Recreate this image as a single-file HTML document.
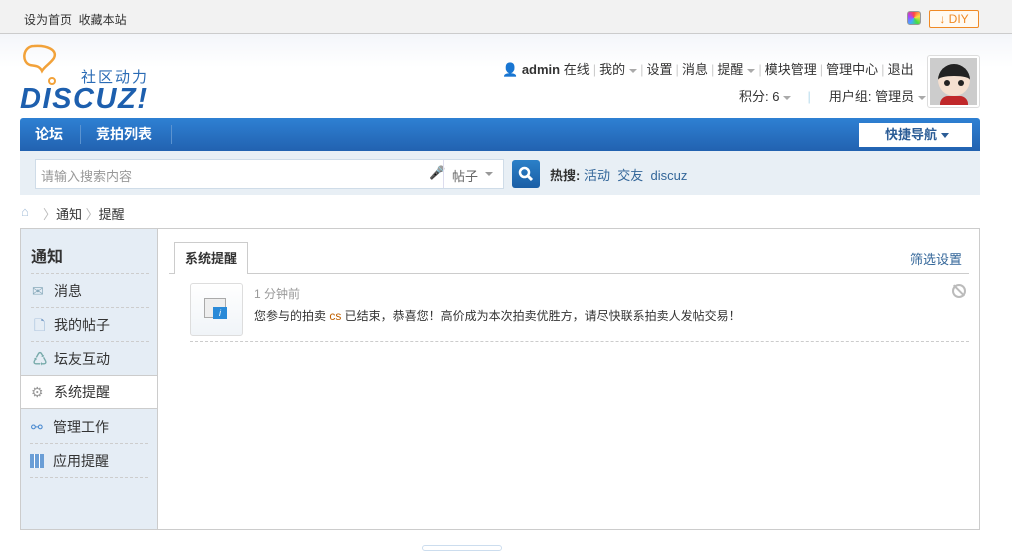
<!DOCTYPE html>
<html><head><meta charset="utf-8"><style>
*{margin:0;padding:0;box-sizing:border-box}
body{width:1012px;height:549px;overflow:hidden;background:#fff;font:12px "Liberation Sans","Noto Sans CJK SC",sans-serif;color:#333;position:relative}
.a{position:absolute}
a{color:#336699;text-decoration:none}
.tb{left:0;top:0;width:1012px;height:34px;background:#f2f2f2;border-bottom:1px solid #ccc}
.hd{left:0;top:34px;width:1012px;height:84px;background:linear-gradient(#f4f6fa,#fff 40%)}
.sep{color:#ccc;margin:0 3px}
.caret{display:inline-block;width:0;height:0;border:4px solid transparent;border-top-color:#aaa;border-bottom:0;vertical-align:middle;margin-left:4px}
.nav{left:20px;top:118px;width:960px;height:33px;background:linear-gradient(#2e80d3,#2262b0);border-radius:3px 3px 0 0}
.nav span{position:absolute;top:0;height:33px;line-height:33px;color:#fff;font-size:14px;font-weight:bold}
.sch{left:20px;top:151px;width:960px;height:44px;background:#e8eff5}
.side{left:20px;top:228px;width:138px;height:302px;background:#e5edf5;border:1px solid #ccc;border-right:none}
.side .it{position:absolute;left:10px;width:118px;height:34px;line-height:34px;font-size:14px;padding-left:23px;border-bottom:1px dashed #cdcdcd}
.main{left:157px;top:228px;width:823px;height:302px;border:1px solid #ccc;border-left:1px solid #ccc}
</style></head><body>
<div class="a" style="left:0;top:4px;width:1012px;height:1px;background:#aab0c8"></div>
<div class="a tb"></div>
<div class="a" style="left:24px;top:11px;font-size:12px;color:#333">设为首页&nbsp;&nbsp;收藏本站</div>
<div class="a" style="left:907px;top:11px;width:14px;height:14px;border:1px solid #999;border-radius:3px;background:conic-gradient(#f44,#fd4,#4d4,#4af,#a4f,#f44)"></div>
<div class="a" style="left:929px;top:10px;width:50px;height:18px;border:1px solid #f08a24;border-radius:2px;background:#fffaf2;color:#f08a24;font-size:12px;line-height:16px;text-align:center">↓ DIY</div>
<div class="a hd"></div>
<!-- logo -->
<svg class="a" style="left:20px;top:44px" width="140" height="68">
<path d="M14 2 C3 2 1 18 10 21 C14 22 19 21 22 27 C25 22 30 20 34 14 C38 6 27 1 14 2Z" fill="none" stroke="#f2a23a" stroke-width="2.5"/>
<circle cx="32" cy="37" r="3" fill="none" stroke="#f2a23a" stroke-width="2"/>
<text x="0" y="64" font-family="Liberation Sans" font-style="italic" font-weight="bold" font-size="29" fill="#1d5fae" letter-spacing="-1" textLength="126">DISCUZ!</text>
</svg>
<div class="a" style="left:81px;top:66px;color:#2a6bb5;font-size:15px;letter-spacing:2px">社区动力</div>
<div class="a" style="left:502px;top:59px;font-size:13px;color:#333;white-space:nowrap">
<span style="color:#7aa3d0">👤</span> <b>admin</b> 在线<span class="sep">|</span>我的<span class="caret"></span><span class="sep">|</span>设置<span class="sep">|</span>消息<span class="sep">|</span>提醒<span class="caret"></span><span class="sep">|</span>模块管理<span class="sep">|</span>管理中心<span class="sep">|</span>退出</div>
<div class="a" style="left:739px;top:86px;font-size:13px;color:#333;white-space:nowrap">积分: 6<span class="caret"></span><span class="sep" style="margin:0 18px 0 16px;color:#bde">|</span>用户组: 管理员<span class="caret"></span></div>
<div class="a" style="left:927px;top:55px;width:53px;height:53px;border:1px solid #ddd;border-radius:3px;background:#fff;padding:2px">
<div style="width:47px;height:47px;background:#ccc;position:relative;overflow:hidden">
<div class="a" style="left:8px;top:6px;width:32px;height:32px;border-radius:50%;background:#f5e0d0;border-top:12px solid #222"></div>
<div class="a" style="left:14px;top:22px;width:6px;height:6px;border-radius:50%;background:#222"></div>
<div class="a" style="left:28px;top:22px;width:6px;height:6px;border-radius:50%;background:#222"></div>
<div class="a" style="left:10px;top:38px;width:28px;height:12px;background:#c0282a;border-radius:8px 8px 0 0"></div>
</div></div>
<div class="a nav">
<span style="left:15px">论坛</span>
<div class="a" style="left:60px;top:7px;width:1px;height:19px;background:#5b93d0"></div>
<span style="left:76px">竞拍列表</span>
<div class="a" style="left:151px;top:7px;width:1px;height:19px;background:#5b93d0"></div>
<div class="a" style="left:839px;top:5px;width:113px;height:24px;background:#fff;color:#2b5c96;font-size:13px;font-weight:bold;line-height:24px;padding-left:26px">快捷导航<span class="a" style="left:82px;top:10px;border:4px solid transparent;border-top:5px solid #2b5c96;border-bottom:0"></span></div>
</div>
<div class="a sch"></div>
<div class="a" style="left:35px;top:159px;width:469px;height:30px;background:#fff;border:1px solid #cfdce8"></div>
<div class="a" style="left:41px;top:166px;color:#999;font-size:13px">请输入搜索内容</div>
<div class="a" style="left:429px;top:165px;color:#aaa;font-size:13px">🎤</div>
<div class="a" style="left:443px;top:160px;width:1px;height:28px;background:#dde"></div>
<div class="a" style="left:452px;top:166px;color:#666;font-size:13px">帖子</div>
<div class="a" style="left:485px;top:172px;border:4px solid transparent;border-top-color:#999;border-bottom:0"></div>
<div class="a" style="left:512px;top:160px;width:28px;height:28px;background:linear-gradient(#2b80c8,#1a5ea5);border-radius:3px"></div>
<svg class="a" style="left:517px;top:165px" width="18" height="18"><circle cx="7.5" cy="7.5" r="4.5" fill="none" stroke="#fff" stroke-width="2.5"/><path d="M11 11 L15 15" stroke="#fff" stroke-width="3"/></svg>
<div class="a" style="left:550px;top:165px;font-size:13px;white-space:nowrap"><b>热搜:</b> <a>活动</a>&nbsp;&nbsp;<a>交友</a>&nbsp;&nbsp;<a>discuz</a></div>
<div class="a" style="left:21px;top:204px;color:#a8c0da;font-size:13px">⌂</div>
<div class="a" style="left:43px;top:204px;font-size:13px;color:#333;white-space:nowrap"><span style="color:#bbb">〉</span>通知 <span style="color:#bbb">〉</span>提醒</div>
<div class="a side">
<div class="a" style="left:10px;top:14px;font-size:16px;font-weight:bold;color:#333">通知</div>
<div class="a" style="left:10px;top:44px;width:118px;border-bottom:1px dashed #cdcdcd"></div>
<div class="it" style="top:45px"><span class="a" style="left:1px;color:#8ab">✉</span>消息</div>
<div class="it" style="top:79px"><span class="a" style="left:3px;color:#7a9fc8">🗋</span>我的帖子</div>
<div class="it" style="top:113px;border:none"><span class="a" style="left:2px;color:#7aa">♺</span>坛友互动</div>
</div>
<div class="a" style="left:20px;top:375px;width:138px;height:34px;background:#fff;border-top:1px solid #ccc;border-bottom:1px solid #ccc;border-left:1px solid #ccc;font-size:14px;line-height:33px;padding-left:33px"><span class="a" style="left:10px;color:#999">⚙</span>系统提醒</div>
<div class="a" style="left:30px;top:410px;width:118px;height:34px;line-height:34px;font-size:14px;padding-left:23px;border-bottom:1px dashed #cdcdcd"><span class="a" style="left:1px;color:#4a8ad0">⚯</span>管理工作</div>
<div class="a" style="left:30px;top:444px;width:118px;height:34px;line-height:34px;font-size:14px;padding-left:23px;border-bottom:1px dashed #cdcdcd"><span class="a" style="left:0;top:10px;width:14px;height:14px;background:repeating-linear-gradient(90deg,#6a9ed6 0 4px,transparent 4px 5px),#fff;"></span>应用提醒</div>
<div class="a main"></div>
<div class="a" style="left:169px;top:273px;width:800px;height:1px;background:#ccc"></div>
<div class="a" style="left:174px;top:242px;width:74px;height:32px;background:#fff;border:1px solid #ccc;border-bottom:none;font-size:13px;font-weight:bold;line-height:32px;text-align:center">系统提醒</div>
<div class="a" style="left:910px;top:249px;font-size:13px;color:#336699">筛选设置</div>
<div class="a" style="left:190px;top:283px;width:53px;height:53px;border:1px solid #ddd;border-radius:3px;background:linear-gradient(#fff,#f0f4f8)"></div>
<div class="a" style="left:204px;top:298px;width:22px;height:20px;border:1px solid #aaa;background:#eee"></div>
<div class="a" style="left:213px;top:307px;width:14px;height:12px;background:#2a8ad8;color:#fff;font-size:9px;text-align:center;line-height:12px;font-style:italic">i</div>
<div class="a" style="left:254px;top:285px;color:#999;font-size:12px">1 分钟前</div>
<div class="a" style="left:254px;top:307px;color:#333;font-size:12px;white-space:nowrap">您参与的拍卖 <span style="color:#c06000">cs</span> 已结束，恭喜您！高价成为本次拍卖优胜方，请尽快联系拍卖人发帖交易！</div>
<div class="a" style="left:952px;top:284px;width:14px;height:14px;border:2px solid #bbb;border-radius:50%"></div>
<div class="a" style="left:958px;top:283px;width:2px;height:15px;background:#bbb;transform:rotate(-45deg)"></div>
<div class="a" style="left:190px;top:341px;width:779px;border-top:1px dashed #ccc"></div>
<div class="a" style="left:422px;top:545px;width:80px;height:6px;border:1px solid #cde;border-radius:3px"></div>
</body></html>
